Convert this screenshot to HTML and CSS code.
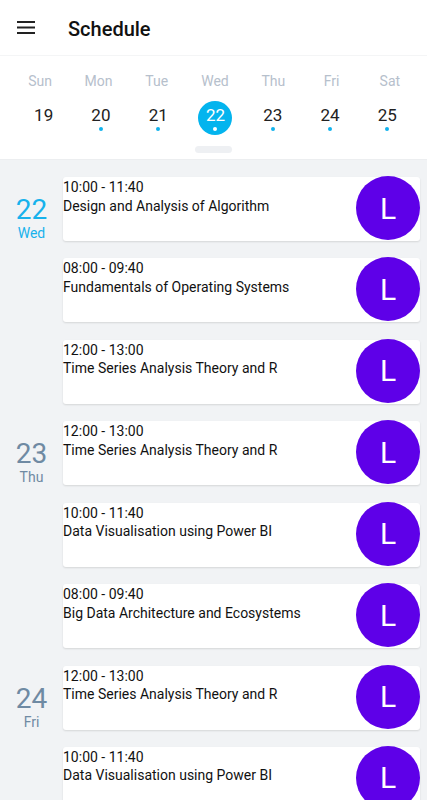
FILE: index.html
```html
<!DOCTYPE html>
<html>
<head>
<meta charset="utf-8">
<link rel="stylesheet" href="styles.css">
</head>
<body>
<header class="topbar">
  <svg class="menu" width="18" height="14" viewBox="0 0 18 14"><rect x="0" y="0" width="18" height="2" fill="#222"/><rect x="0" y="5.5" width="18" height="2" fill="#222"/><rect x="0" y="11" width="18" height="2" fill="#222"/></svg>
  <h1 class="title">Schedule</h1>
</header>
<section class="cal">
  <div class="names">
    <span class="dname">Sun</span><span class="dname">Mon</span><span class="dname">Tue</span><span class="dname">Wed</span><span class="dname">Thu</span><span class="dname">Fri</span><span class="dname">Sat</span>
  </div>
  <div class="dates">
    <div class="cell"><span class="dnum"><span class="n">19</span></span></div>
    <div class="cell"><span class="dnum"><span class="n">20</span><i class="dot"></i></span></div>
    <div class="cell"><span class="dnum"><span class="n">21</span><i class="dot"></i></span></div>
    <div class="cell"><span class="dnum sel"><span class="n">22</span><i class="dot"></i></span></div>
    <div class="cell"><span class="dnum"><span class="n">23</span><i class="dot"></i></span></div>
    <div class="cell"><span class="dnum"><span class="n">24</span><i class="dot"></i></span></div>
    <div class="cell"><span class="dnum"><span class="n">25</span><i class="dot"></i></span></div>
  </div>
  <div class="handle"></div>
</section>
<main class="list">
  <div class="group today">
    <div class="date"><span class="dd">22</span><span class="dw">Wed</span></div>
    <div class="card"><div class="txt"><div>10:00 - 11:40</div><div>Design and Analysis of Algorithm</div></div><div class="av">L</div></div>
    <div class="card"><div class="txt"><div>08:00 - 09:40</div><div>Fundamentals of Operating Systems</div></div><div class="av">L</div></div>
    <div class="card"><div class="txt"><div>12:00 - 13:00</div><div>Time Series Analysis Theory and R</div></div><div class="av">L</div></div>
  </div>
  <div class="group">
    <div class="date"><span class="dd">23</span><span class="dw">Thu</span></div>
    <div class="card"><div class="txt"><div>12:00 - 13:00</div><div>Time Series Analysis Theory and R</div></div><div class="av">L</div></div>
    <div class="card"><div class="txt"><div>10:00 - 11:40</div><div>Data Visualisation using Power BI</div></div><div class="av">L</div></div>
    <div class="card"><div class="txt"><div>08:00 - 09:40</div><div>Big Data Architecture and Ecosystems</div></div><div class="av">L</div></div>
  </div>
  <div class="group">
    <div class="date"><span class="dd">24</span><span class="dw">Fri</span></div>
    <div class="card"><div class="txt"><div>12:00 - 13:00</div><div>Time Series Analysis Theory and R</div></div><div class="av">L</div></div>
    <div class="card"><div class="txt"><div>10:00 - 11:40</div><div>Data Visualisation using Power BI</div></div><div class="av">L</div></div>
  </div>
</main>
</body>
</html>
```
FILE: styles.css
```css
* { box-sizing: border-box; }
html, body { margin: 0; padding: 0; }
body {
  width: 427px;
  height: 800px;
  overflow: hidden;
  font-family: Roboto, "Noto Sans", sans-serif;
  background: #f1f3f5;
}
.topbar {
  height: 56px;
  background: #fff;
  display: flex;
  align-items: center;
  padding-left: 17px;
  border-bottom: 1px solid #f4f5f6;
}
.menu { display: block; margin-top: 1px; }
.title {
  margin: 0 0 0 33px;
  font-size: 20px;
  font-weight: 500;
  color: #111;
  line-height: 24px;
  padding-top: 2px;
}
.cal {
  background: #fff;
  padding: 15px 0 6px 0;
  border-bottom: 1px solid #eceef0;
  display: flex;
  flex-direction: column;
  align-items: center;
}
.names {
  width: 100%;
  display: grid;
  grid-template-columns: repeat(7, 1fr);
  padding: 0 8px 0 11px;
}
.dname {
  text-align: center;
  font-size: 14px;
  line-height: 20px;
  color: #b6c0cc;
}
.dates {
  width: 100%;
  display: grid;
  grid-template-columns: repeat(7, 1fr);
  padding: 0 11px 0 15px;
  margin-top: 10px;
}
.cell {
  display: flex;
  justify-content: center;
}
.dnum {
  width: 34px;
  height: 34px;
  border-radius: 50%;
  display: flex;
  flex-direction: column;
  align-items: center;
  padding-top: 4px;
}
.dnum .n {
  font-size: 17px;
  line-height: 20px;
  color: #222;
}
.dot {
  display: block;
  width: 4px;
  height: 4px;
  border-radius: 50%;
  background: #10b2ec;
  margin-top: 2px;
}
.dnum.sel { background: #03b4ee; }
.dnum.sel .n { color: #fff; }
.dnum.sel .dot { background: #fff; }
.handle {
  margin-top: 11px;
  width: 37px;
  height: 7px;
  border-radius: 4px;
  background: #eef0f3;
}
.list {
  padding: 17px 7px 0 0;
  display: flex;
  flex-direction: column;
  gap: 17.43px;
}
.group {
  display: grid;
  grid-template-columns: 63px 1fr;
  row-gap: 17.43px;
}
.date {
  grid-column: 1;
  grid-row: 1;
  align-self: start;
  display: flex;
  flex-direction: column;
  align-items: center;
  color: #6f8aa3;
  padding-top: 18px;
}
.today .date { color: #17b2ec; }
.dd { font-size: 28px; line-height: 30px; }
.dw { font-size: 14px; line-height: 14px; margin-top: 1px; }
.card {
  grid-column: 2;
  height: 64px;
  background: #fff;
  border-radius: 3px;
  box-shadow: 0 1px 2px rgba(0,0,0,0.12);
  display: flex;
  justify-content: space-between;
}
.txt {
  font-size: 14px;
  line-height: 18.5px;
  color: #111;
  padding-top: 1px;
}
.av {
  width: 64px;
  height: 64px;
  border-radius: 50%;
  background: #5e00e8;
  color: #fff;
  font-size: 30px;
  display: flex;
  align-items: center;
  justify-content: center;
  flex-shrink: 0;
  margin-top: -1px;
}
```
